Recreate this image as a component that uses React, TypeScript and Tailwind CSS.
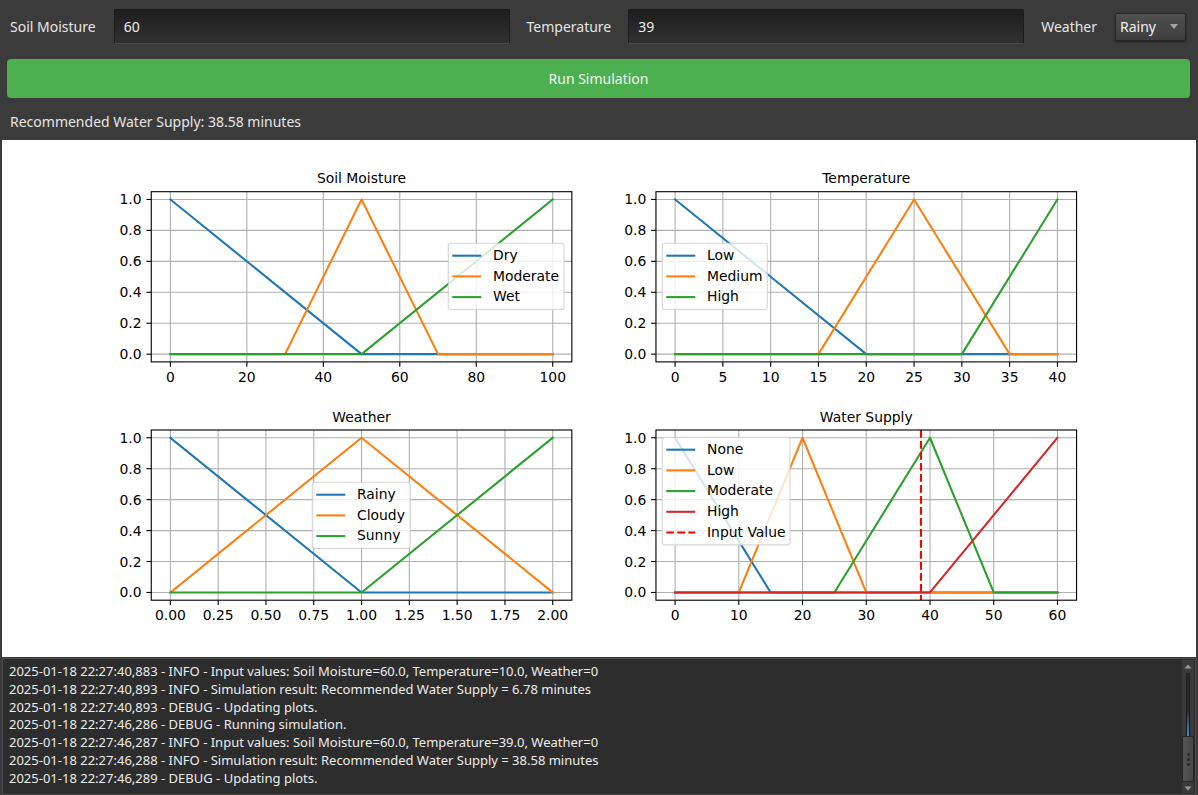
import React from "react";

type Pt = [number, number];
type Series = { label: string; color: string; pts: Pt[]; dashed?: boolean };

const BLUE = "#1f77b4";
const ORANGE = "#ff7f0e";
const GREEN = "#2ca02c";
const RED = "#d62728";

// axes size in px (matplotlib subplot 2x2, hspace 0.4)
const W = 420.6;
const H = 170.2;
const FS = 13.9;

type PlotDef = {
    title: string;
    left: number;
    top: number;
    height: number;
    xmin: number;
    xmax: number;
    xticks: number[];
    digits: number;
    series: Series[];
    vline?: number;
    legend: { x: number; y: number; w: number };
};

const plots: PlotDef[] = [
    {
        title: "Soil Moisture",
        left: 149.25,
        top: 51.7,
        height: 258,
        xmin: 0,
        xmax: 100,
        xticks: [0, 20, 40, 60, 80, 100],
        digits: 0,
        series: [
            { label: "Dry", color: BLUE, pts: [[0, 1], [50, 0], [100, 0]] },
            { label: "Moderate", color: ORANGE, pts: [[0, 0], [30, 0], [50, 1], [70, 0], [100, 0]] },
            { label: "Wet", color: GREEN, pts: [[0, 0], [50, 0], [100, 1]] },
        ],
        legend: { x: 446.3, y: 103.3, w: 115.7 },
    },
    {
        title: "Temperature",
        left: 56.96,
        top: 51.7,
        height: 258,
        xmin: 0,
        xmax: 40,
        xticks: [0, 5, 10, 15, 20, 25, 30, 35, 40],
        digits: 0,
        series: [
            { label: "Low", color: BLUE, pts: [[0, 1], [20, 0], [40, 0]] },
            { label: "Medium", color: ORANGE, pts: [[0, 0], [15, 0], [25, 1], [35, 0], [40, 0]] },
            { label: "High", color: GREEN, pts: [[0, 0], [30, 0], [40, 1]] },
        ],
        legend: { x: 63.3, y: 103.3, w: 105 },
    },
    {
        title: "Weather",
        left: 149.25,
        top: 32,
        height: 259,
        xmin: 0,
        xmax: 2,
        xticks: [0, 0.25, 0.5, 0.75, 1, 1.25, 1.5, 1.75, 2],
        digits: 2,
        series: [
            { label: "Rainy", color: BLUE, pts: [[0, 1], [1, 0], [2, 0]] },
            { label: "Cloudy", color: ORANGE, pts: [[0, 0], [1, 1], [2, 0]] },
            { label: "Sunny", color: GREEN, pts: [[0, 0], [1, 0], [2, 1]] },
        ],
        legend: { x: 310.3, y: 84.3, w: 98 },
    },
    {
        title: "Water Supply",
        left: 56.96,
        top: 32,
        height: 259,
        xmin: 0,
        xmax: 60,
        xticks: [0, 10, 20, 30, 40, 50, 60],
        digits: 0,
        series: [
            { label: "None", color: BLUE, pts: [[0, 1], [15, 0], [60, 0]] },
            { label: "Low", color: ORANGE, pts: [[0, 0], [10, 0], [20, 1], [30, 0], [60, 0]] },
            { label: "Moderate", color: GREEN, pts: [[0, 0], [25, 0], [40, 1], [50, 0], [60, 0]] },
            { label: "High", color: RED, pts: [[0, 0], [40, 0], [60, 1]] },
        ],
        vline: 38.58,
        legend: { x: 63.3, y: 39.3, w: 127.7 },
    },
];

const logLines = [
    "2025-01-18 22:27:40,883 - INFO - Input values: Soil Moisture=60.0, Temperature=10.0, Weather=0",
    "2025-01-18 22:27:40,893 - INFO - Simulation result: Recommended Water Supply = 6.78 minutes",
    "2025-01-18 22:27:40,893 - DEBUG - Updating plots.",
    "2025-01-18 22:27:46,286 - DEBUG - Running simulation.",
    "2025-01-18 22:27:46,287 - INFO - Input values: Soil Moisture=60.0, Temperature=39.0, Weather=0",
    "2025-01-18 22:27:46,288 - INFO - Simulation result: Recommended Water Supply = 38.58 minutes",
    "2025-01-18 22:27:46,289 - DEBUG - Updating plots.",
];

const Plot = ({ p }: { p: PlotDef }) => {
    const r = p.xmax - p.xmin;
    const sx = (x: number) => p.left + (W * (x - p.xmin + 0.05 * r)) / (1.1 * r);
    const sy = (y: number) => p.top + H * (1 - (y + 0.05) / 1.1);
    const B = p.top + H;
    const yticks = [0, 0.2, 0.4, 0.6, 0.8, 1.0];
    const clipId = "clip-" + p.title.replace(/\s/g, "");
    const items: Series[] = [...p.series];
    if (p.vline !== undefined) items.push({ label: "Input Value", color: "#ff0000", pts: [], dashed: true });
    const lh = 12.4 * 2 + 20.7 * (items.length - 1);

    return (
        <svg width={597} height={p.height} className="block font-['DejaVu_Sans',sans-serif]">
            <defs>
                <clipPath id={clipId}>
                    <rect x={p.left} y={p.top} width={W} height={H} />
                </clipPath>
            </defs>
            <text x={p.left + W / 2} y={p.top - 8.3} textAnchor="middle" fontSize={FS} fill="#000">
                {p.title}
            </text>

            {/* grid */}
            {p.xticks.map((t) => (
                <line key={"gx" + t} x1={sx(t)} x2={sx(t)} y1={p.top} y2={B} stroke="#b0b0b0" strokeWidth={1.11} />
            ))}
            {yticks.map((t) => (
                <line key={"gy" + t} x1={p.left} x2={p.left + W} y1={sy(t)} y2={sy(t)} stroke="#b0b0b0" strokeWidth={1.11} />
            ))}

            {/* ticks + labels */}
            {p.xticks.map((t) => (
                <g key={"tx" + t}>
                    <line x1={sx(t)} x2={sx(t)} y1={B} y2={B + 4.86} stroke="#000" strokeWidth={1.11} />
                    <text x={sx(t)} y={B + 19.8} textAnchor="middle" fontSize={FS} fill="#000">
                        {t.toFixed(p.digits)}
                    </text>
                </g>
            ))}
            {yticks.map((t) => (
                <g key={"ty" + t}>
                    <line x1={p.left - 4.86} x2={p.left} y1={sy(t)} y2={sy(t)} stroke="#000" strokeWidth={1.11} />
                    <text x={p.left - 9.7} y={sy(t) + 5} textAnchor="end" fontSize={FS} fill="#000">
                        {t.toFixed(1)}
                    </text>
                </g>
            ))}

            {/* data */}
            <g clipPath={`url(#${clipId})`}>
                {p.series.map((s) => (
                    <polyline
                        key={s.label}
                        points={s.pts.map(([x, y]) => `${sx(x)},${sy(y)}`).join(" ")}
                        fill="none"
                        stroke={s.color}
                        strokeWidth={2.08}
                        strokeLinejoin="round"
                        strokeLinecap="square"
                    />
                ))}
                {p.vline !== undefined && (
                    <line
                        x1={sx(p.vline)}
                        x2={sx(p.vline)}
                        y1={p.top}
                        y2={B}
                        stroke="#ff0000"
                        strokeWidth={2.08}
                        strokeDasharray="7.7 3.3"
                    />
                )}
            </g>

            <rect x={p.left} y={p.top} width={W} height={H} fill="none" stroke="#000" strokeWidth={1.11} />

            {/* legend */}
            <rect
                x={p.legend.x}
                y={p.legend.y}
                width={p.legend.w}
                height={lh}
                rx={2.8}
                fill="#fff"
                fillOpacity={0.8}
                stroke="#cccccc"
                strokeOpacity={0.8}
                strokeWidth={1.11}
            />
            {items.map((s, i) => {
                const cy = p.legend.y + 12.4 + 20.7 * i;
                return (
                    <g key={"lg" + s.label}>
                        <line
                            x1={p.legend.x + 4}
                            x2={p.legend.x + 33}
                            y1={cy}
                            y2={cy}
                            stroke={s.color}
                            strokeWidth={2.08}
                            strokeDasharray={s.dashed ? "7.7 3.3" : undefined}
                        />
                        <text x={p.legend.x + 44.7} y={cy + 4.3} fontSize={FS} fill="#000">
                            {s.label}
                        </text>
                    </g>
                );
            })}
        </svg>
    );
};

const Field = ({ value, className }: { value: string; className: string }) => (
    <div
        className={
            "flex h-full flex-1 items-center rounded-[2px] border border-[#1b1b1b] border-b-[#4a4a4a] bg-linear-to-b from-[#1e1e1e] to-[#313131] px-[9px] text-[#ececec] " +
            className
        }
    >
        {value}
    </div>
);

const Combo = () => (
    <div className="ml-[18px] flex h-[28px] w-[71px] items-center justify-between rounded-[2px] border border-[#262626] bg-linear-to-b from-[#505050] to-[#3e3e3e] pl-[4px] pr-[7px] text-[#f0f0f0] shadow-[0_1px_2px_rgba(0,0,0,0.5)]">
        <span>Rainy</span>
        <svg width="8" height="5" viewBox="0 0 8 5">
            <path d="M0 0 L8 0 L4 5 Z" fill="#a3a3a3" />
        </svg>
    </div>
);

const ScrollBar = () => (
    <div className="my-[1px] mr-[1px] ml-[3px] flex w-[12px] flex-col items-center bg-[#3a3a3a]">
        <svg width="8" height="12" viewBox="0 0 8 12" className="mt-[1px] shrink-0">
            <path d="M0.5 7.5 L4 3.5 L7.5 7.5 Z" fill="#9a9a9a" />
        </svg>
        <div className="h-[63px] w-[4px] shrink-0 border-x border-[#1d1d1d] bg-linear-to-b from-[#2a2a2a] via-[#2a2a2a] via-60% to-[#3d8ee8]" />
        <div className="flex h-[46px] w-full shrink-0 flex-col items-center justify-center gap-[2px] rounded-[1px] border border-[#262626] bg-linear-to-r from-[#555555] to-[#464646]">
            <span className="h-[3px] w-[3px] rounded-full bg-[#2a2a2a]" />
            <span className="h-[3px] w-[3px] rounded-full bg-[#2a2a2a]" />
            <span className="h-[3px] w-[3px] rounded-full bg-[#2a2a2a]" />
        </div>
        <svg width="8" height="12" viewBox="0 0 8 12" className="shrink-0">
            <path d="M0.5 4.5 L4 8.5 L7.5 4.5 Z" fill="#9a9a9a" />
        </svg>
    </div>
);

export default function App() {
    return (
        <div className="flex h-[795px] w-full flex-col overflow-hidden bg-[#3b3b3b] font-['Noto_Sans',sans-serif] text-[14px] text-[#e6e6e6]">
            <div className="flex h-[45px] items-end pl-[10px] pr-[12px]">
                <div className="flex h-[36px] w-full items-center pb-[1px]">
                    <span>Soil Moisture</span>
                    <Field value="60" className="ml-[18px]" />
                    <span className="ml-[17px]">Temperature</span>
                    <Field value="39" className="ml-[17px]" />
                    <span className="ml-[17px]">Weather</span>
                    <Combo />
                </div>
            </div>

            <div className="mt-[14px] ml-[7px] mr-[8px] flex h-[39px] items-center justify-center rounded-[4px] bg-[#4caf50] text-[#f4f4f4]">
                Run Simulation
            </div>

            <div className="h-[42px] pl-[10px] pt-[14px] leading-[19px]">Recommended Water Supply: 38.58 minutes</div>

            <div className="mx-[2px] grid h-[517px] shrink-0 grid-cols-2 bg-white">
                {plots.map((p) => (
                    <Plot key={p.title} p={p} />
                ))}
            </div>

            <div className="mx-[2px] mt-[1px] flex min-h-0 flex-1 border border-[#4a4a4a] bg-[#2d2d2d]">
                <div className="flex-1 overflow-hidden whitespace-pre pl-[6px] pt-[4px] text-[13px] leading-[17.75px] text-[#ececec]">
                    {logLines.map((l, i) => (
                        <div key={i}>{l}</div>
                    ))}
                </div>
                <ScrollBar />
            </div>
        </div>
    );
}
